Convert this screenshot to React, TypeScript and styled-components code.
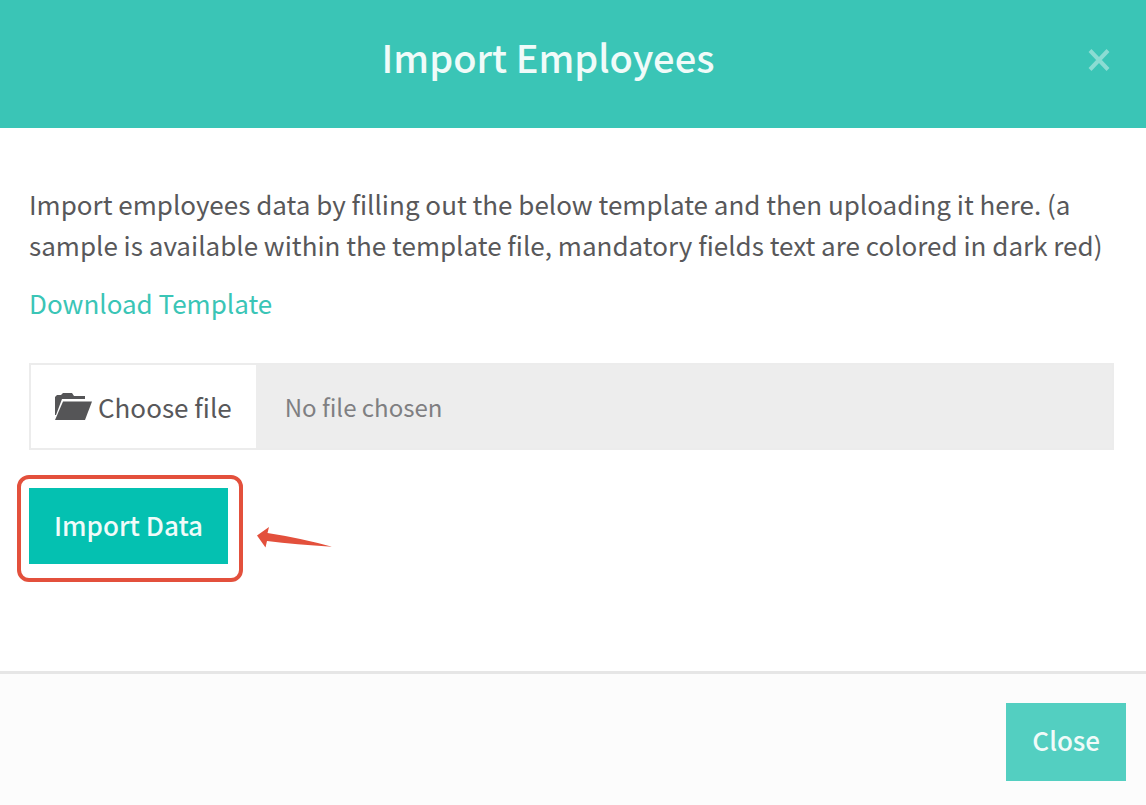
import React, { useState } from "react";
import styled, { createGlobalStyle } from "styled-components";

const GlobalStyle = createGlobalStyle`
  * { box-sizing: border-box; }
  body {
    margin: 0;
    background: #fff;
    color: #58585a;
    font-family: "Noto Sans CJK SC", "Open Sans", sans-serif;
    font-size: 26px;
    line-height: 41px;
  }
  button, input { font: inherit; }
`;

const Dialog = styled.div`
  min-height: 100vh;
  display: flex;
  flex-direction: column;
`;

const Header = styled.header`
  display: flex;
  align-items: center;
  padding: 30px 30px 38px;
  background: #3ac5b6;
`;

const Title = styled.h1`
  flex: 1;
  margin: 0;
  padding-bottom: 6px;
  font-size: 38px;
  line-height: 54px;
  font-weight: 500;
  text-align: center;
  color: #f0fbf9;
`;

const DismissButton = styled.button`
  display: flex;
  margin-left: 16px;
  padding: 5px;
  border: 0;
  background: none;
  color: #8bdcd3;
  cursor: pointer;
`;

const Body = styled.main`
  flex: 1;
  padding: 55px 32px 0 29px;
`;

const Intro = styled.p`
  margin: 0 0 17px;
`;

const TemplateLink = styled.a`
  display: inline-block;
  color: #3ac5b6;
  text-decoration: none;
`;

const FilePicker = styled.div`
  display: flex;
  height: 87px;
  margin-top: 40px;
  border: 2px solid #ececec;
  background: #ededed;
`;

const FileInput = styled.input`
  position: absolute;
  width: 1px;
  height: 1px;
  opacity: 0;
`;

const ChooseLabel = styled.label`
  display: flex;
  align-items: center;
  gap: 6px;
  padding: 0 24px;
  background: #fff;
  white-space: nowrap;
  cursor: pointer;
`;

const FileName = styled.span`
  display: flex;
  align-items: center;
  padding: 0 29px;
  font-size: 24px;
  color: #7f7f82;
`;

const ImportArea = styled.div`
  position: relative;
  display: inline-flex;
  margin-top: 38px;
`;

const ActionButton = styled.button<{ $soft?: boolean }>`
  height: ${(p) => (p.$soft ? 78 : 76)}px;
  padding: ${(p) => (p.$soft ? "0 26px 6px" : "0 25px 4px")};
  border: 0;
  background: ${(p) => (p.$soft ? "#53cfc1" : "#04c1b1")};
  color: #f0fbf9;
  font-weight: 500;
  white-space: nowrap;
  cursor: pointer;
`;

const Highlight = styled.div`
  position: absolute;
  inset: -13px -15px -18px -12px;
  border: 4px solid #e3503c;
  border-radius: 12px;
  pointer-events: none;
`;

const Pointer = styled.svg`
  position: absolute;
  left: calc(100% + 28px);
  top: 38px;
`;

const Footer = styled.footer`
  display: flex;
  justify-content: flex-end;
  padding: 29px 20px 24px;
  border-top: 3px solid #e6e6e6;
  background: #fcfcfc;
`;

export default function App() {
  const [fileName, setFileName] = useState("No file chosen");
  return (
    <>
      <GlobalStyle />
      <Dialog role="dialog" aria-labelledby="dialog-title">
        <Header>
          <Title id="dialog-title">Import Employees</Title>
          <DismissButton type="button" aria-label="Dismiss">
            <svg width="24" height="24" viewBox="0 0 24 24" fill="none" stroke="currentColor" strokeWidth="4">
              <path d="M3 2.500L21 21.500M21 2.500L3 21.500" />
            </svg>
          </DismissButton>
        </Header>
        <Body>
          <Intro>
            Import employees data by filling out the below template and then uploading it here. (a sample is
            available within the template file, mandatory fields text are colored in dark red)
          </Intro>
          <TemplateLink href="#template">Download Template</TemplateLink>
          <FilePicker>
            <FileInput
              id="employee-file"
              type="file"
              onChange={(e) => setFileName(e.target.files?.[0]?.name ?? "No file chosen")}
            />
            <ChooseLabel htmlFor="employee-file">
              <svg width="37" height="28" viewBox="0 0 37 28" fill="#555557">
                <path d="M0 22V4l2-2h4l2-2h9l2 3h11v3H7L1 22z" />
                <path d="M8 8.500h29L30 27H0z" />
              </svg>
              Choose file
            </ChooseLabel>
            <FileName>{fileName}</FileName>
          </FilePicker>
          <ImportArea>
            <ActionButton type="button">Import Data</ActionButton>
            <Highlight />
            <Pointer width="76" height="22" viewBox="0 0 76 22" fill="#e3503c" aria-hidden="true">
              <path d="M1 9.500L13 1L11.500 7Q44 12 76 20.700Q40 18.500 11 15L9.500 21.500Z" />
            </Pointer>
          </ImportArea>
        </Body>
        <Footer>
          <ActionButton type="button" $soft>Close</ActionButton>
        </Footer>
      </Dialog>
    </>
  );
}
